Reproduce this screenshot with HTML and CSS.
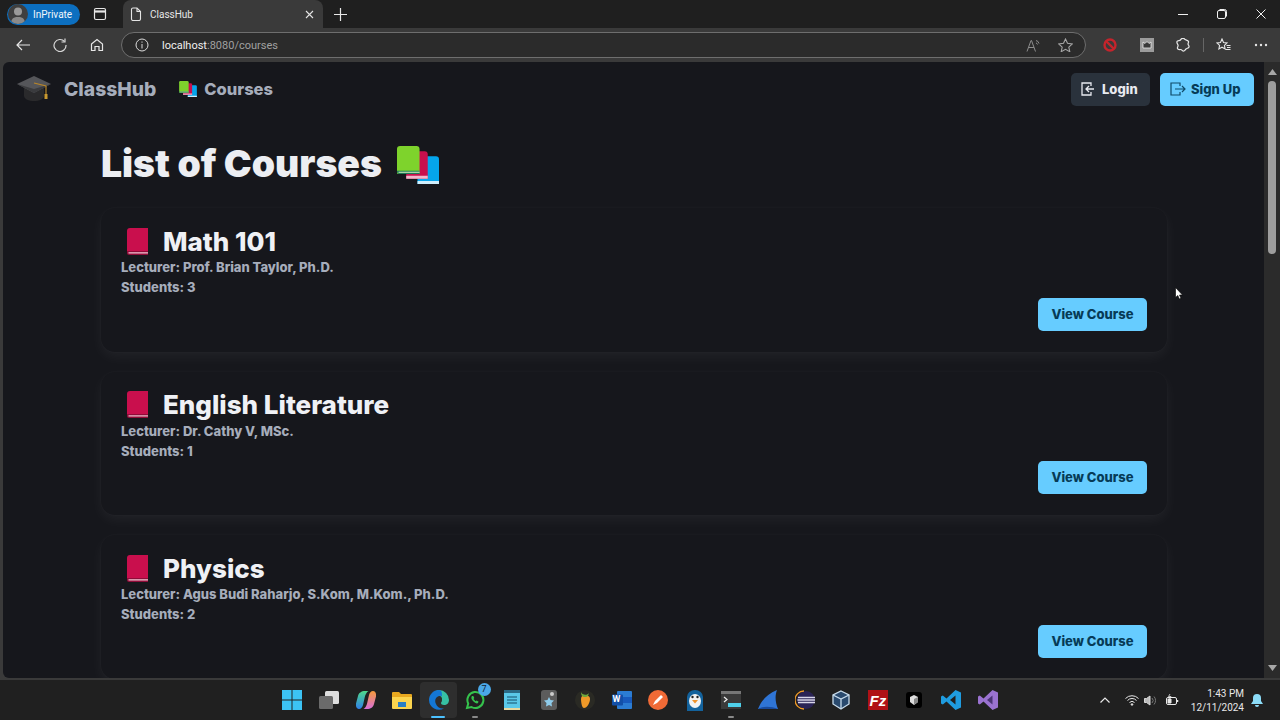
FILE: index.html

```html
<!DOCTYPE html>
<html lang="en">
<head>
  <meta charset="UTF-8">
  <meta name="viewport" content="width=device-width, initial-scale=1.0">
  <title>ClassHub</title>
  <link rel="stylesheet" href="styles.css">
</head>
<body>

  <svg class="defs" width="0" height="0">
    <defs>
      <linearGradient id="cop-a" x1="0" y1="0" x2="0" y2="1"><stop offset="0" stop-color="#4fd88a"/><stop offset="1" stop-color="#2f7fe8"/></linearGradient>
      <linearGradient id="cop-b" x1="0" y1="0" x2="0" y2="1"><stop offset="0" stop-color="#f59a3a"/><stop offset="1" stop-color="#d96fd8"/></linearGradient>
    </defs>
    <symbol id="book-red" viewBox="0 0 22 27">
      <path d="M1 3a3 3 0 0 1 3-3h18v26H3a2 2 0 0 1-2-2z" fill="#c90f4d"/>
      <path d="M1 23h21v4H3a2 2 0 0 1-2-2z" fill="#8e0c38"/>
      <path d="M2.500 24.300h19.500v1.200H2.500z" fill="#f3c4d3"/>
    </symbol>
    <symbol id="books" viewBox="0 0 41 37">
      <path d="M21 10h17a3 3 0 0 1 3 3v24H20V11z" fill="#05a5ec"/>
      <path d="M20 34h21v3H20z" fill="#cfeefc"/>
      <path d="M11 5h16a3 3 0 0 1 3 3v24H9V7z" fill="#c90f4d"/>
      <path d="M9 29h21v3H9z" fill="#f0b8cb"/>
      <path d="M3 0h16a3 3 0 0 1 3 3v24H0V3a3 3 0 0 1 3-3z" fill="#7ed32c"/>
      <path d="M0 24h22v3.200H2a2 2 0 0 1-2-2z" fill="#1f7a56"/>
      <path d="M1.500 25h20.500v1H1.500z" fill="#d8f2c0"/>
    </symbol>
  </svg>

  <div class="tabstrip">
    <div class="profile">
      <span class="avatar"><svg width="20" height="20" viewBox="0 0 20 20"><circle cx="10" cy="7.500" r="4" fill="#9a9a9a"/><path d="M3 20c0-6 3-7 7-7s7 1 7 7z" fill="#8a8a8a"/></svg></span>
      <span>InPrivate</span>
    </div>
    <svg class="tab-actions" width="14" height="14" viewBox="0 0 14 14" fill="none" stroke="#e6e6e6" stroke-width="1.200"><rect x="1.500" y="1.500" width="11" height="11" rx="1.500"/><path d="M1.500 4.500h11" stroke-width="2.200"/></svg>
    <div class="tab">
      <svg width="12" height="14" viewBox="0 0 12 14" fill="none" stroke="#e4e4e4" stroke-width="1.100"><path d="M1.500 2.500a1.500 1.500 0 0 1 1.500-1.500h4l3.500 3.500v7.500a1.500 1.500 0 0 1-1.500 1.500H3a1.500 1.500 0 0 1-1.500-1.500z"/><path d="M7 1v3.500h3.500"/></svg>
      <span class="tab-title">ClassHub</span>
      <svg width="9" height="9" viewBox="0 0 9 9" stroke="#e4e4e4" stroke-width="1.100"><path d="M1 1l7 7M8 1l-7 7"/></svg>
    </div>
    <svg class="new-tab" width="13" height="13" viewBox="0 0 13 13" stroke="#e8e8e8" stroke-width="1.200"><path d="M6.500 0v13M0 6.500h13"/></svg>
    <div class="window-btns">
      <svg width="10" height="10" viewBox="0 0 10 10" stroke="#f0f0f0" stroke-width="1"><path d="M0 5.500h10"/></svg>
      <svg width="10" height="10" viewBox="0 0 10 10" fill="none" stroke="#f0f0f0" stroke-width="1"><rect x="0.500" y="1.500" width="8" height="8" rx="1.500"/><path d="M2.500 0.500h5a2 2 0 0 1 2 2v5"/></svg>
      <svg width="10" height="10" viewBox="0 0 10 10" stroke="#f0f0f0" stroke-width="1"><path d="M0.500 0.500l9 9M9.500 0.500l-9 9"/></svg>
    </div>
  </div>

  <div class="toolbar">
    <svg class="tool" width="14" height="12" viewBox="0 0 14 12" fill="none" stroke="#e6e6e6" stroke-width="1.200"><path d="M14 6H1M6 1L1 6l5 5"/></svg>
    <svg class="tool" width="14" height="14" viewBox="0 0 14 14" fill="none" stroke="#d8d8d8" stroke-width="1.200"><path d="M11.500 3.500A6 6 0 1 0 13 7"/><path d="M12 .5v3.500H8.500"/></svg>
    <svg class="tool" width="14" height="14" viewBox="0 0 14 14" fill="none" stroke="#e6e6e6" stroke-width="1.200"><path d="M1.500 6L7 1.500 12.500 6v6.500H9V8.500H5v4H1.500z"/></svg>
    <div class="address">
      <svg width="14" height="14" viewBox="0 0 14 14" fill="none" stroke="#dcdcdc" stroke-width="1"><circle cx="7" cy="7" r="6"/><path d="M7 6v4.500M7 3.500v1.200"/></svg>
      <span class="url"><b>localhost</b>:8080/courses</span>
      <svg class="read-aloud" width="15" height="13" viewBox="0 0 15 13" fill="none" stroke="#8d8d8d" stroke-width="1"><path d="M1 12.500L5 1.500h.500L9.500 12.500M2.500 8.500h5.500"/><path d="M10 1.500a4 4 0 0 1 3 3M10 4a2 2 0 0 1 1.500 1.500"/></svg>
      <svg width="15" height="14" viewBox="0 0 15 14" fill="none" stroke="#a5a5a5" stroke-width="1.100"><path d="M7.500 1l2 4.300 4.800.600-3.500 3.200 1 4.600-4.300-2.400-4.300 2.400 1-4.600L.700 5.900l4.800-.600z"/></svg>
    </div>
    <div class="extensions">
      <svg width="14" height="14" viewBox="0 0 14 14" fill="none" stroke="#c4242c" stroke-width="2.400"><circle cx="7" cy="7" r="5.500"/><path d="M3 3l8 8"/></svg>
      <svg width="14" height="14" viewBox="0 0 14 14"><rect width="14" height="14" fill="#9c9c9c"/><path d="M3 4l2 1.500L7 3.500l2 2L11 4v6H3z" fill="#3a3a3a" stroke="#eee" stroke-width=".8"/></svg>
      <svg width="14" height="14" viewBox="0 0 14 14" fill="none" stroke="#e6e6e6" stroke-width="1.200"><path d="M4.500 2a2.500 2.500 0 0 1 4.500-.500c1 .800 3 .500 3.500 2 .300 1-.500 1.500-.500 2.500s1.500 1.500 1 3c-.500 1.500-2 1-3 2s-1.500 2.500-3 2c-1-.400-1-1.500-2.500-1.500S2 12 1.500 10.500C1 9 2.500 8.500 2 7 1.500 5.500.500 5 1 3.500 1.500 2 3.500 3 4.500 2z"/></svg>
      <span class="ext-divider"></span>
      <svg width="15" height="14" viewBox="0 0 15 14" fill="none" stroke="#e6e6e6" stroke-width="1.100"><path d="M6 1l1.500 3.500 3.500.400-2.600 2.500.700 3.600L6 9.200 2.900 11l.7-3.600L1 4.900l3.500-.400z"/><path d="M10.500 7.500H14.500M11 9.500H14.500M9.500 11.500H14.500"/></svg>
      <svg class="more" width="14" height="4" viewBox="0 0 14 4" fill="#e6e6e6"><circle cx="2" cy="2" r="1.200"/><circle cx="7" cy="2" r="1.200"/><circle cx="12" cy="2" r="1.200"/></svg>
    </div>
  </div>

  <div class="viewport">
    <div class="page">
      <nav class="navbar">
        <a class="brand">
          <svg width="34" height="26" viewBox="0 0 34 26">
            <path d="M7 11v9c0 3 5 5 10 5s10-2 10-5v-9z" fill="#2a2a2c"/>
            <path d="M0 8L17 0l17 8-17 9z" fill="#55565a"/>
            <path d="M0 8l17 9 17-9-17 5z" fill="#3a3b3e"/>
            <path d="M17 7l12 3v9" fill="none" stroke="#b8862a" stroke-width="1.200"/>
            <rect x="27.500" y="18" width="3" height="5" fill="#c99a30"/>
          </svg>
          <span>ClassHub</span>
        </a>
        <a class="nav-link">
          <svg width="18" height="16"><use href="#books"/></svg>
          <span>Courses</span>
        </a>
        <div class="nav-actions">
          <button class="btn btn-dark">
            <svg width="14" height="14" viewBox="0 0 14 14" fill="none" stroke="#e8eaf0" stroke-width="1.300"><path d="M10 4V1H1v12h9v-3"/><path d="M13 7H5M8 4L5 7l3 3"/></svg>
            Login
          </button>
          <button class="btn btn-primary">
            <svg width="16" height="14" viewBox="0 0 16 14" fill="none" stroke="#0f4a68" stroke-width="1.200"><path d="M10 4V1H1v12h9v-3"/><path d="M5 7h10M12 4l3 3-3 3"/></svg>
            Sign Up
          </button>
        </div>
      </nav>

      <main class="container">
        <h1>List of Courses <svg class="title-icon" width="42" height="38"><use href="#books"/></svg></h1>

        <div class="card">
          <h2><svg width="22" height="27"><use href="#book-red"/></svg> Math 101</h2>
          <p>Lecturer: Prof. Brian Taylor, Ph.D.</p>
          <p>Students: 3</p>
          <div class="card-actions"><button class="view-btn">View Course</button></div>
        </div>

        <div class="card">
          <h2><svg width="22" height="27"><use href="#book-red"/></svg> English Literature</h2>
          <p>Lecturer: Dr. Cathy V, MSc.</p>
          <p>Students: 1</p>
          <div class="card-actions"><button class="view-btn">View Course</button></div>
        </div>

        <div class="card">
          <h2><svg width="22" height="27"><use href="#book-red"/></svg> Physics</h2>
          <p>Lecturer: Agus Budi Raharjo, S.Kom, M.Kom., Ph.D.</p>
          <p>Students: 2</p>
          <div class="card-actions"><button class="view-btn">View Course</button></div>
        </div>
      </main>

      <svg class="cursor" width="8" height="13" viewBox="0 0 8 13"><path d="M.5.500v10l2.300-2 1.500 3.500 1.700-.700L4.500 8H7.500z" fill="#fff" stroke="#000" stroke-width=".6"/></svg>
    </div>
    <div class="scrollbar">
      <svg width="9" height="6" viewBox="0 0 9 6" fill="#a8a8a8"><path d="M4.500 0L9 6H0z"/></svg>
      <div class="scroll-track"><div class="scroll-thumb"></div></div>
      <svg width="9" height="6" viewBox="0 0 9 6" fill="#a8a8a8"><path d="M4.500 6L0 0h9z"/></svg>
    </div>
  </div>

  <footer class="taskbar">
    <div class="task-spacer"></div>
    <div class="task-icons">
      <span class="task"><svg width="20" height="20" viewBox="0 0 20 20" fill="#3cc3f5"><rect width="9.500" height="9.500"/><rect x="10.500" width="9.500" height="9.500"/><rect y="10.500" width="9.500" height="9.500"/><rect x="10.500" y="10.500" width="9.500" height="9.500"/></svg></span>
      <span class="task"><svg width="20" height="18" viewBox="0 0 20 18"><rect x="6" width="14" height="13" rx="1.500" fill="#dedede"/><rect y="5" width="14" height="13" rx="1.500" fill="#6b6b6b"/></svg></span>
      <span class="task"><svg width="20" height="20" viewBox="0 0 20 20"><path d="M9 1h3.500c-2 1-3.200 4-3.700 6L7 15c-.500 2-2 4-4 4-2.500 0-3.500-3-3-5.500L2 6c.500-3 3.500-5 7-5z" fill="url(#cop-a)"/><path d="M11 19H7.500c2-1 3.200-4 3.700-6L13 5c.500-2 2-4 4-4 2.500 0 3.500 3 3 5.500L18 14c-.500 3-3.500 5-7 5z" fill="url(#cop-b)"/></svg></span>
      <span class="task"><svg width="20" height="18" viewBox="0 0 20 18"><path d="M0 2a1 1 0 0 1 1-1h6l2 2h10a1 1 0 0 1 1 1v13H0z" fill="#e8a81f"/><path d="M0 6h20v11a1 1 0 0 1-1 1H1a1 1 0 0 1-1-1z" fill="#fbd44e"/><rect x="6" y="11" width="8" height="5" fill="#2a7fc4"/></svg></span>
      <span class="task task-active"><svg width="20" height="20" viewBox="0 0 20 20"><path d="M10 0a10 10 0 0 1 10 10c0 3-2 5-5 5-2 0-3-1-3-2 0-1 1-1 1-3a4 4 0 0 0-8-1C4 5 6 0 10 0z" fill="#36c0a4"/><path d="M10 0C4 0 0 5 0 10a10 10 0 0 0 15 8.500C11 19 8 17 7 14 5 10 7 7 10 6c2-.500 3 .500 3 1C13 3 13 0 10 0z" fill="#1477d4"/></svg><i class="task-dot dot-blue"></i></span>
      <span class="task"><svg width="20" height="20" viewBox="0 0 20 20" fill="none"><path d="M2 18l1.200-4.500A8 8 0 1 1 6.500 17z" stroke="#35c24c" stroke-width="2"/><path d="M7 6c-1 1-1 3 1 5s4 3 5 2l.5-1.500-2-1-1 .800L8.500 9l.800-1-1-2z" fill="#35c24c"/></svg><i class="badge">7</i><i class="task-dot"></i></span>
      <span class="task"><svg width="16" height="20" viewBox="0 0 16 20"><rect y="1" width="16" height="19" rx="1" fill="#5ac8e8"/><rect y="0" width="16" height="3" fill="#2b6a85"/><path d="M3 7h10M3 10h10M3 13h10" stroke="#14506c"/><rect y="18" width="16" height="2" fill="#e8d9a0"/></svg></span>
      <span class="task"><svg width="16" height="20" viewBox="0 0 16 20"><rect width="16" height="20" rx="3" fill="#5c5c5c"/><path d="M8 7l1.500 3 3.500.500-2.500 2.500.500 3.500L8 15l-3 1.500.500-3.500L3 10.500 6.500 10z" fill="#8ecbea"/><circle cx="11" cy="4" r="2" fill="#ccc"/></svg></span>
      <span class="task"><svg width="20" height="20" viewBox="0 0 20 20"><circle cx="10" cy="10" r="10" fill="#2a2a24"/><path d="M6 9c0-3 2-4 4-4s5 1 5 4c0 4-3 9-6 9-2 0-3-5-3-9z" fill="#f09a28"/><path d="M6 2c1 3 6 4 8 1-1 3-1 4-4 4S6 5 6 2z" fill="#6ea83c"/></svg></span>
      <span class="task"><svg width="20" height="18" viewBox="0 0 20 18"><rect x="5" width="15" height="18" rx="1" fill="#2b7cd3"/><rect x="5" y="6" width="15" height="6" fill="#185abd"/><rect y="3.500" width="11" height="11" rx="1" fill="#124fa8"/></svg><b class="word-w">W</b></span>
      <span class="task"><svg width="20" height="20" viewBox="0 0 20 20"><circle cx="10" cy="10" r="10" fill="#f06a36"/><path d="M5 15l2-4 6-6 2 2-6 6z" fill="#fff"/></svg></span>
      <span class="task"><svg width="16" height="21" viewBox="0 0 16 21"><path d="M0 21V7a8 7 0 0 1 16 0v14z" fill="#13629c"/><ellipse cx="8" cy="11" rx="6" ry="7" fill="#f2f2f2"/><circle cx="5.500" cy="7" r="1.200" fill="#222"/><circle cx="10.500" cy="7" r="1.200" fill="#222"/><path d="M5 10h6l-3 3.500z" fill="#f0922a"/></svg></span>
      <span class="task"><svg width="20" height="18" viewBox="0 0 20 18"><rect width="20" height="18" fill="#3a3a3a"/><rect width="20" height="3" fill="#777"/><path d="M3 6l3 2.500L3 11" fill="none" stroke="#eee" stroke-width="1.200"/><rect x="7" y="12" width="13" height="4" fill="#4fd0ea"/></svg><i class="task-dot"></i></span>
      <span class="task"><svg width="20" height="20" viewBox="0 0 20 20"><path d="M0 19C3 11 9 4 19 0c-2 5-2 12 1 19z" fill="#2f75d6"/><path d="M0 19c4-3 13-3 20 0z" fill="#184a9c"/></svg></span>
      <span class="task"><svg width="20" height="20" viewBox="0 0 20 20"><circle cx="11" cy="10" r="9" fill="#2a2356"/><path d="M3 7.500h17M2.500 10h18M3 12.500h17" stroke="#d8d6e8" stroke-width="1.400"/><path d="M9 1a9 9 0 0 0 0 18" fill="none" stroke="#f09a28" stroke-width="1.300"/></svg></span>
      <span class="task"><svg width="20" height="20" viewBox="0 0 20 20" fill="#2a4a6e" stroke="#c8dcec" stroke-width="1.300"><path d="M10 1l8 4v9l-8 5-8-5V5z"/><path d="M2 5l8 4 8-4M10 9v10"/></svg></span>
      <span class="task"><span class="fz"><i>Fz</i></span></span>
      <span class="task"><svg width="16" height="16" viewBox="0 0 16 16"><rect width="16" height="16" rx="3" fill="#000"/><path d="M4 5l4-2 4 2v5l-4 3-4-3z" fill="#ddd"/><path d="M8 7v6l4-3V5z" fill="#888"/></svg></span>
      <span class="task"><svg width="20" height="20" viewBox="0 0 20 20"><path d="M14.500 0L20 2.500v15L14.500 20 5.500 11.500 1.800 14.500 0 13.500V6.500l1.800-1 3.700 3z" fill="#1f9ce0"/><path d="M14.500 5.500L9 10l5.500 4.500z" fill="#202020"/></svg></span>
      <span class="task"><svg width="20" height="20" viewBox="0 0 20 20"><path d="M14.500 0L20 2.500v15L14.500 20 5.500 11.500 1.800 14.500 0 13.500V6.500l1.800-1 3.700 3z" fill="#9a72d0"/><path d="M14.500 5.500L9 10l5.500 4.500z" fill="#4a3474"/></svg></span>
    </div>
    <div class="tray">
      <svg class="tray-chevron" width="10" height="6" viewBox="0 0 10 6" fill="none" stroke="#e8e8e8" stroke-width="1.200"><path d="M.500 5.500L5 1l4.500 4.500"/></svg>
      <svg class="tray-wifi" width="14" height="11" viewBox="0 0 14 11" fill="none" stroke="#e8e8e8" stroke-width="1"><path d="M.500 3.500a9 9 0 0 1 13 0M2.500 5.500a6 6 0 0 1 9 0M4.500 7.500a3.500 3.500 0 0 1 5 0"/><circle cx="7" cy="9.500" r=".8" fill="#e8e8e8"/></svg>
      <svg class="tray-sound" width="13" height="11" viewBox="0 0 13 11" fill="none" stroke="#d8d8d8" stroke-width="1"><path d="M.500 3.500h2L6 1v9L2.500 7.500h-2z" fill="#bbb"/><path d="M8 3a3.500 3.500 0 0 1 0 5M10 1.500a6 6 0 0 1 0 8" stroke="#777"/></svg>
      <svg class="tray-battery" width="13" height="12" viewBox="0 0 13 12" fill="none" stroke="#e8e8e8" stroke-width="1"><rect x=".500" y="3.500" width="10" height="7" rx="1.500"/><path d="M11.500 6v2" stroke-width="1.500"/><path d="M2 5h3v4H2z" fill="#e8e8e8"/><path d="M4 0L2.500 2.500H5L3.500 5" stroke-width=".8"/></svg>
      <div class="clock">
        <div>1:43 PM</div>
        <div>12/11/2024</div>
      </div>
      <svg class="bell" width="12" height="13" viewBox="0 0 12 13" fill="#8cdcf8"><path d="M6 0a4 4 0 0 1 4 4v3l2 3H0l2-3V4a4 4 0 0 1 4-4z"/><path d="M4 11h4a2 2 0 0 1-4 0z"/></svg>
    </div>
  </footer>

</body>
</html>
```

FILE: styles.css

```css
* {
  box-sizing: border-box;
}
html, body {
  margin: 0;
  height: 720px;
  overflow: hidden;
}
body {
  font-family: Roboto, sans-serif;
  display: flex;
  flex-direction: column;
  background: #3a3a3a;
  color: #e6e6e6;
}
.defs {
  position: absolute;
}

/* browser chrome */
.tabstrip {
  height: 28px;
  flex: none;
  display: flex;
  align-items: center;
  background: #1f1f1f;
  padding-left: 7px;
}
.profile {
  width: 73px;
  height: 21px;
  display: flex;
  align-items: center;
  gap: 5px;
  border-radius: 11px;
  background: #0c6fc0;
  font-size: 10px;
  color: #f0f6fb;
}
.avatar {
  width: 20px;
  height: 20px;
  margin-left: 1px;
  border-radius: 50%;
  overflow: hidden;
  background: #3f3f3f;
}
.avatar svg {
  display: block;
}
.tab-actions {
  margin-left: 13px;
}
.tab {
  width: 200px;
  height: 28px;
  margin-left: 16px;
  padding: 0 9px 0 7px;
  display: flex;
  align-items: center;
  gap: 8px;
  border-radius: 8px 8px 0 0;
  background: #3a3a3a;
  font-size: 10px;
}
.tab-title {
  flex: 1;
}
.new-tab {
  margin-left: 11px;
}
.window-btns {
  margin-left: auto;
  display: flex;
  gap: 29px;
  padding-right: 14px;
}

.toolbar {
  height: 34px;
  flex: none;
  display: flex;
  align-items: center;
  padding-left: 16px;
  background: #3a3a3a;
}
.tool {
  margin-right: 23px;
}
.address {
  width: 965px;
  height: 26px;
  margin-left: -6px;
  padding: 0 12px 0 13px;
  display: flex;
  align-items: center;
  gap: 13px;
  border: 1px solid #6e6e6e;
  border-radius: 13px;
  background: #2b2b2b;
}
.url {
  flex: 1;
  font-size: 11px;
  color: #a0a0a0;
}
.url b {
  font-weight: 400;
  color: #f0f0f0;
}
.read-aloud {
  margin-right: 4px;
}
.extensions {
  flex: 1;
  display: flex;
  align-items: center;
  gap: 22.500px;
  padding-left: 17px;
}
.ext-divider {
  width: 1px;
  height: 14px;
  margin: 0 -10px;
  background: #666;
}
.more {
  margin-left: 0;
}

/* page */
.viewport {
  height: 618px;
  flex: none;
  display: flex;
  padding: 0 0 2px 3px;
}
.page {
  position: relative;
  flex: 1;
  overflow: hidden;
  border-radius: 6px 0 0 6px;
  background: #16171c;
  font-family: Inter, sans-serif;
}
.navbar {
  height: 54px;
  display: flex;
  align-items: center;
  padding: 0 10px 0 14px;
}
.brand, .nav-link {
  display: flex;
  align-items: center;
  font-weight: 800;
  color: #a6adbb;
}
.brand {
  gap: 13px;
  font-size: 19.300px;
}
.nav-link {
  gap: 7px;
  margin-left: 23px;
  font-size: 16.500px;
}
.nav-actions {
  margin-left: auto;
  display: flex;
  gap: 10px;
}
button {
  font-family: Inter, sans-serif;
  border: none;
  font-weight: 800;
}
.btn {
  height: 33px;
  display: flex;
  align-items: center;
  gap: 5px;
  padding: 0 0 1px 10px;
  border-radius: 5px;
  font-size: 13px;
  white-space: nowrap;
}
.btn-dark {
  width: 79px;
  gap: 7px;
  background: #2a323c;
  color: #e8eaf0;
}
.btn-primary {
  width: 94px;
  background: #66ccff;
  color: #063b57;
}

.container {
  width: 1066px;
  margin-left: 98px;
}
h1 {
  margin: 0;
  height: 92px;
  display: flex;
  align-items: center;
  gap: 15px;
  padding-top: 2px;
  font-size: 37.300px;
  font-weight: 900;
  color: #eceef2;
}
.title-icon {
  margin-top: 3px;
}
.card {
  height: 143.500px;
  margin-bottom: 20px;
  padding: 18px 20px 21px;
  display: flex;
  flex-direction: column;
  border-radius: 14px;
  background: #16171c;
  box-shadow: 0 0 2px rgba(255, 255, 255, 0.05), 0 5px 14px rgba(255, 255, 255, 0.05);
}
.card h2 {
  margin: 0 0 1px 5px;
  height: 30px;
  display: flex;
  align-items: center;
  gap: 15px;
  font-size: 26px;
  font-weight: 800;
  color: #eff1f5;
}
.card p {
  margin: 0;
  height: 20px;
  line-height: 20px;
  font-size: 13px;
  font-weight: 800;
  color: #a6adbb;
}
.card-actions {
  margin-top: auto;
  display: flex;
  justify-content: flex-end;
}
.view-btn {
  width: 109px;
  height: 33px;
  padding: 0 0 1px;
  border-radius: 5px;
  background: #66ccff;
  color: #063b57;
  font-size: 13px;
}
.cursor {
  position: absolute;
  left: 1172px;
  top: 225px;
}

.scrollbar {
  width: 16px;
  flex: none;
  display: flex;
  flex-direction: column;
  align-items: center;
  padding: 7px 0;
  background: #2b2b2b;
}
.scroll-track {
  flex: 1;
  width: 100%;
  padding: 6px 4px;
}
.scroll-thumb {
  height: 173px;
  border-radius: 4px;
  background: #9e9e9e;
}

/* windows taskbar */
.taskbar {
  height: 40px;
  flex: none;
  display: flex;
  align-items: center;
  background: #202020;
}
.task-spacer {
  flex: 1 1 0;
}
.task-icons {
  display: flex;
  align-items: center;
}
.task {
  position: relative;
  width: 36.600px;
  height: 36px;
  display: flex;
  align-items: center;
  justify-content: center;
}
.task-active {
  border-radius: 4px;
  background: #2e2e2e;
}
.task-dot {
  position: absolute;
  left: 15px;
  bottom: 0;
  width: 6px;
  height: 2px;
  border-radius: 1px;
  background: #8a8a8a;
}
.dot-blue {
  left: 11px;
  width: 14px;
  background: #4cc2ff;
}
.badge {
  position: absolute;
  top: 1px;
  right: 3px;
  width: 13px;
  height: 13px;
  border-radius: 50%;
  background: #4aa8e8;
  font-size: 9px;
  font-style: normal;
  line-height: 13px;
  text-align: center;
  color: #123;
}
.word-w {
  position: absolute;
  left: 9px;
  top: 12px;
  font-size: 9px;
  color: #fff;
}
.fz {
  width: 20px;
  height: 20px;
  display: flex;
  align-items: center;
  justify-content: center;
  background: #b01116;
  font-family: "Liberation Sans", sans-serif;
  font-size: 15px;
  font-weight: 700;
  color: #fff;
}
.tray {
  flex: 1 1 0;
  display: flex;
  align-items: center;
  justify-content: flex-end;
}
.tray-wifi {
  margin-left: 15px;
}
.tray-sound {
  margin-left: 5px;
}
.tray-battery {
  margin-left: 9px;
}
.clock {
  width: 60px;
  margin-left: 5px;
  padding-top: 1px;
  font-size: 10px;
  line-height: 14px;
  text-align: right;
  color: #e8e8e8;
}
.bell {
  margin-left: 7px;
  margin-right: 17px;
}
```
